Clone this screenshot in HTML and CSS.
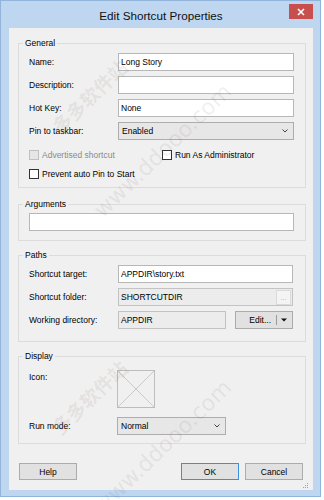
FILE: index.html
```html
<!DOCTYPE html>
<html>
<head>
<meta charset="utf-8">
<link rel="stylesheet" href="styles.css">
</head>
<body>
<div class="window">
  <div class="titlebar">
    <div class="title">Edit Shortcut Properties</div>
    <div class="close"><svg width="8" height="8" viewBox="0 0 8 8"><path d="M1 1L7 7M7 1L1 7" stroke="#fff" stroke-width="1.6"/></svg></div>
  </div>
  <div class="content">
    <fieldset class="group general">
      <legend>General</legend>
      <div class="form">
        <span class="lbl">Name:</span><div class="field">Long Story</div>
        <span class="lbl">Description:</span><div class="field"></div>
        <span class="lbl">Hot Key:</span><div class="field">None</div>
        <span class="lbl">Pin to taskbar:</span>
        <div class="select"><span>Enabled</span><svg width="6" height="4" viewBox="0 0 6 4"><path d="M0.5 0.5L3 3L5.5 0.5" fill="none" stroke="#444" stroke-width="1"/></svg></div>
      </div>
      <div class="checks">
        <div class="check-row">
          <div class="check disabled"><span class="box"></span><span>Advertised shortcut</span></div>
          <div class="check"><span class="box"></span><span>Run As Administrator</span></div>
        </div>
        <div class="check-row">
          <div class="check"><span class="box"></span><span>Prevent auto Pin to Start</span></div>
        </div>
      </div>
    </fieldset>

    <fieldset class="group arguments">
      <legend>Arguments</legend>
      <div class="field"></div>
    </fieldset>

    <fieldset class="group paths">
      <legend>Paths</legend>
      <div class="form">
        <span class="lbl">Shortcut target:</span><div class="field">APPDIR\story.txt</div>
        <span class="lbl">Shortcut folder:</span>
        <div class="field ro folder"><span>SHORTCUTDIR</span><span class="dots">...</span></div>
        <span class="lbl">Working directory:</span>
        <div class="split">
          <div class="field ro wd">APPDIR</div>
          <div class="btn editbtn"><span>Edit...</span><span class="sep"></span><svg width="6" height="4" viewBox="0 0 6 4"><path d="M0 0.5H6L3 3.5Z" fill="#111"/></svg></div>
        </div>
      </div>
    </fieldset>

    <fieldset class="group display">
      <legend>Display</legend>
      <div class="dform">
        <span class="lbl icon-lbl">Icon:</span>
        <div class="iconbox"><svg width="38" height="38" viewBox="0 0 38 38"><path d="M1 1L37 37M37 1L1 37" stroke="#c9c9c9" stroke-width="1"/></svg></div>
        <span class="lbl">Run mode:</span>
        <div class="select runmode"><span>Normal</span><svg width="6" height="4" viewBox="0 0 6 4"><path d="M0.5 0.5L3 3L5.5 0.5" fill="none" stroke="#444" stroke-width="1"/></svg></div>
      </div>
    </fieldset>

    <div class="buttons">
      <div class="btn">Help</div>
      <div class="spacer"></div>
      <div class="btn default">OK</div>
      <div class="btn">Cancel</div>
    </div>
    <svg class="grip" width="5" height="5" viewBox="0 0 5 5"><rect x="4" y="0" width="1" height="1" fill="#a0a0a0"/><rect x="2" y="2" width="1" height="1" fill="#a0a0a0"/><rect x="4" y="2" width="1" height="1" fill="#a0a0a0"/><rect x="0" y="4" width="1" height="1" fill="#a0a0a0"/><rect x="2" y="4" width="1" height="1" fill="#a0a0a0"/><rect x="4" y="4" width="1" height="1" fill="#a0a0a0"/></svg>
  </div>
  <div class="wm wm-cn wm-top">多多软件站</div>
  <div class="wm wm-url wm-top">www.ddooo.com</div>
  <div class="wm wm-cn wm-bottom">多多软件站</div>
  <div class="wm wm-url wm-bottom">www.ddooo.com</div>
</div>
</body>
</html>
```

FILE: styles.css
```css
* { box-sizing: border-box; }
html, body { margin: 0; padding: 0; background: #fff; }
body {
  font-family: "Liberation Sans", Arial, sans-serif;
  font-size: 8.5px;
  color: #000;
  width: 324px;
  height: 500px;
  overflow: hidden;
}
.window {
  width: 321px;
  height: 497px;
  border: 1px solid #93b4da;
  background: #bed6ef;
  padding: 0 7px 6px 8px;
  display: flex;
  flex-direction: column;
  position: relative;
}
.titlebar {
  height: 27px;
  flex: none;
  display: grid;
  grid-template-columns: 1fr auto 1fr;
}
.title {
  grid-column: 2;
  font-size: 11.7px;
  line-height: 24px;
  padding-top: 3px;
  color: #111;
  white-space: nowrap;
}
.close {
  grid-column: 3;
  justify-self: end;
  align-self: start;
  margin-top: 3px;
  width: 24px;
  height: 15px;
  background: #c7504f;
  display: flex;
  align-items: center;
  justify-content: center;
}
.content {
  flex: 1;
  background: #f0f0f0;
  padding: 9px 7px 10px 9px;
  display: flex;
  flex-direction: column;
  position: relative;
}
.group {
  margin: 0;
  border: 1px solid #dcdcdc;
  min-width: 0;
}
.group legend {
  padding: 0 2px;
  margin-left: -6px;
  line-height: 12px;
}
.general { padding: 4px 11px 4px 10px; }
.arguments { margin-top: 10px; padding: 3px 11px 9px 10px; }
.paths { margin-top: 8px; padding: 4px 12px 12px 10px; }
.display { margin-top: 8px; padding: 8px 11px 8px 10px; }

.form {
  display: grid;
  grid-template-columns: 89px 1fr;
  grid-auto-rows: 18px;
  row-gap: 5px;
  align-items: center;
}
.lbl { white-space: nowrap; }
.field {
  height: 18px;
  border: 1px solid #b7b7b7;
  background: #fff;
  padding: 0 2px;
  line-height: 16px;
  white-space: nowrap;
}
.field.ro { background: #ececec; border-color: #c3c3c3; }
.folder { display: flex; justify-content: space-between; padding-right: 0; }
.folder .dots {
  width: 15px;
  height: 15px;
  margin: 0 1px 0 auto;
  border: 1px solid #dadada;
  background: #f4f4f4;
  color: #a8a8a8;
  font-size: 7px;
  line-height: 14px;
  text-align: center;
  align-self: center;
}
.select {
  height: 18px;
  border: 1px solid #adadad;
  background: #e7e7e7;
  padding: 0 5px 0 3px;
  display: flex;
  align-items: center;
  justify-content: space-between;
}
.checks { margin-top: 5px; }
.check-row {
  display: grid;
  grid-template-columns: 133px auto;
  height: 19px;
  align-items: center;
}
.check { display: flex; align-items: center; gap: 3px; white-space: nowrap; }
.box {
  width: 10px;
  height: 10px;
  border: 1px solid #333;
  background: #fff;
  flex: none;
}
.check.disabled { color: #8a8a8a; }
.check.disabled .box { border-color: #c0c0c0; background: #e6e6e6; }

.split { display: flex; gap: 9px; height: 18px; }
.wd { width: 108px; }
.btn {
  height: 17px;
  width: 58px;
  border: 1px solid #acacac;
  background: #e1e1e1;
  display: flex;
  align-items: center;
  justify-content: center;
  white-space: nowrap;
}
.editbtn {
  height: 18px;
  justify-content: flex-end;
  padding-right: 5px;
}
.editbtn .sep {
  width: 1px;
  height: 10px;
  background: #9a9a9a;
  margin: 0 4px 0 5px;
}
.dform {
  display: grid;
  grid-template-columns: 88px auto;
  row-gap: 9px;
  align-items: center;
}
.icon-lbl { align-self: start; padding-top: 1px; line-height: 12px; }
.iconbox {
  width: 38px;
  height: 38px;
  border: 1px solid #bdbdbd;
}
.iconbox svg { display: block; margin: -1px; }
.runmode { width: 109px; }
.buttons {
  margin-top: auto;
  display: flex;
  gap: 6px;
  padding: 0 3px 0 1px;
}
.spacer { flex: 1; }
.btn.default { border-color: #3c8fdc; }
.grip { position: absolute; right: 5px; bottom: 2px; }

/* faint diagonal watermark laid over the dialog */
.wm {
  position: absolute;
  pointer-events: none;
  white-space: nowrap;
  color: rgba(120, 90, 90, 0.11);
  transform: translate(-50%, -50%) rotate(-44deg);
  line-height: 1;
}
.wm-cn {
  font-family: "Noto Sans CJK SC", sans-serif;
  font-size: 19px;
  font-weight: bold;
  left: 88px;
}
.wm-url {
  font-family: "DejaVu Sans", sans-serif;
  font-size: 22px;
  left: 162px;
}
.wm-cn.wm-top { top: 95px; }
.wm-url.wm-top { top: 150px; }
.wm-cn.wm-bottom { top: 396px; }
.wm-url.wm-bottom { top: 446px; }
```
